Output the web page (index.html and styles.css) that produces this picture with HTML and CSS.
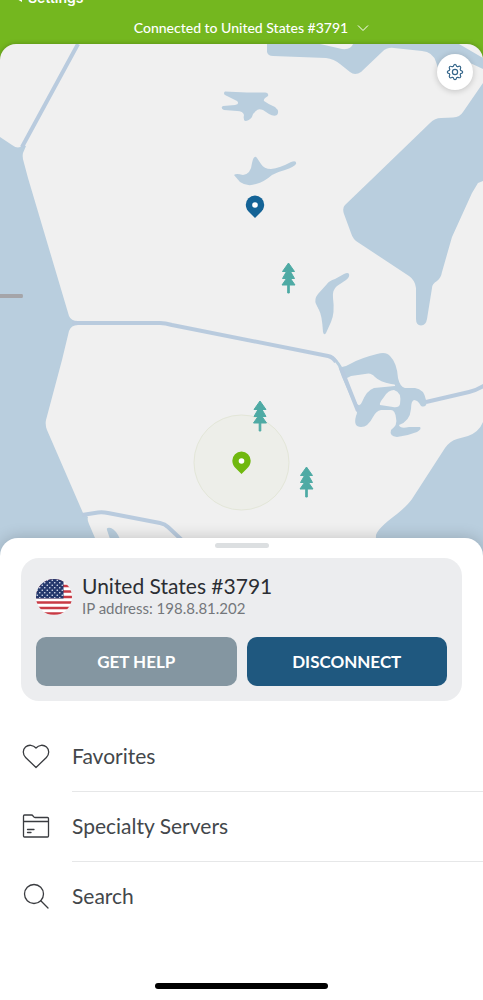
FILE: index.html
```html
<!DOCTYPE html>
<html lang="en">
<head>
<meta charset="utf-8">
<meta name="viewport" content="width=device-width, initial-scale=1">
<title>VPN connection</title>
<link rel="stylesheet" href="styles.css">
</head>
<body>
<div class="app">
  <header class="topbar">
    <a class="back" href="#"><span class="back-arrow" aria-hidden="true"></span>Settings</a>
    <button class="status" type="button">Connected to United States #3791
      <svg class="chevron" width="12" height="8" viewBox="0 0 12 8" aria-hidden="true"><path d="M1 1.500 6 6.500l5-5"/></svg>
    </button>
  </header>

  <main class="main">
    <section class="map" aria-label="Server map">
      <svg class="map-art" viewBox="0 44 483 520" preserveAspectRatio="xMidYMin slice" aria-hidden="true">
        <g class="water">
          <path d="M0 137 12 145Q19 150 22 145L26 146 23 153Q22 157 24 163L28 178 69 316Q71 321 78 321V325Q71 325 69 331L62 360 46 420Q45 425 47 430L83 513 88 517Q87 520 89 524L95 538 108 570H0Z"/>
          <path d="M267 44V52Q268 56 273 56L326 58Q334 59 340 64L350 72Q355 76 361 72L382 52Q387 47 394 48L422 51Q433 52 436 62L442 80 468 62 483 69V58L459 44H353Q351 50 342 49L320 44Z"/>
          <path d="M483 83 463 112Q460 117 453 117.500L441 118Q435 118 430 123L371 180 345 205Q342 208 344 214L351 233Q353 240 359 243L409 276Q415 280 416 288V319Q416 325 421 325.500 426 325 427 319L432 288Q432 284 437 281 441 278 442 272L452 237 472 193 478 183 483 181Z"/>
          <path d="M349 274Q350 277 346 280L337 286Q332 290 333 298 335 313 331 322L326 333Q324 336 323 332 322 315 319 310L316 304Q314 299 318 294L327 284Q329 281 335 279L344 274Q348 272 349 274Z"/>
          <path d="M225 91.500Q235 92 247 92.500H265Q269 93 268 96 263 99 264 101 268 104 275 107 280 111 277 115 274 117 269 114L263 110Q258 108 256 111 253 113 252 117 249 121 245 121 243 119 244 115 243 111 237 111L224 110Q220 108 223 106L235 105Q240 104 237 101L225 95Q223 93 225 91.500Z"/>
          <path d="M234 175Q236 173 243 175 251 174 252 163 254 154 257 158L261 164Q264 169 271 169 280 168 291 162 297 160 296 164 294 167 285 170 277 172 272 175 264 182 256 184 247 187 240 182Z"/>
          <path fill-rule="evenodd" d="M330 355Q337 358 342 367 347 366 352 363 361 358 377 354 386 351 390 356 397 363 398 378 400 387 405 388L415 388Q424 389 426 400L427 402Q426 408 421 406 418 400 414 400 411 401 411 409 410 421 399 425 400 429 409 427L420 427Q422 429 417 432 407 436 397 437 389 436 391 430 398 425 396 418 395 409 390 410L381 410Q376 411 373 417 368 427 361 427 353 427 356 416 358 412 356 409L342 377 338 366ZM347 378Q346 381 349 386L357 404Q360 407 362 402 367 390 374 388L395 386Q396 384 391 384 380 382 375 377 371 372 365 374L351 376ZM380 405Q379 403 384 397 388 390 394 390 402 392 400 404 399 408 393 407Z"/>
          <path d="M483 422Q479 432 468 436L457 439Q450 441 445 448L412 499Q408 505 397 514 378 528 376 535L375 570H483Z"/>
          <path d="M107 530Q106 527 111 528 116 530 120 539H110Z"/>
        </g>
        <path class="river" d="M78 44 22 147M72 323H160Q165 323 172 325L328 356Q333 357 336 362M341 368 358 411M426 402 469 392Q477 390 485 385M82 515 98 512.500Q103 512 108 513L160 523Q165 524 168 527L184 542"/>
        <circle class="halo" cx="241.500" cy="462.500" r="47.500"/>
        <g class="tree">
          <path id="tree" d="M288.500 263 294.500 271.500H290.500L294.500 278.500H290.500L295 285H289.300V293H287.700V285H282L286.500 278.500H282.500L286.500 271.500H282.500Z"/>
          <use href="#tree" x="-28.500" y="138"/>
          <use href="#tree" x="18" y="204"/>
        </g>
        <path class="pin-blue" d="M255 195.500A9.200 9.200 0 0 1 264.200 204.700C264.200 208 262.500 210.500 260.500 212.500L255 218 249.500 212.500C247.500 210.500 245.800 208 245.800 204.700A9.200 9.200 0 0 1 255 195.500Z"/>
        <circle class="pin-hole" cx="255" cy="205" r="2.800"/>
        <path class="pin-green" d="M241.500 451.500A9.200 9.200 0 0 1 250.700 460.700C250.700 464 249 466.500 247 468.500L241.500 474 236 468.500C234 466.500 232.300 464 232.300 460.700A9.200 9.200 0 0 1 241.500 451.500Z"/>
        <circle class="pin-hole" cx="241.500" cy="461" r="2.800"/>
        <path class="marker" d="M0 294H22Q23 294 23 296T22 298H0Z"/>
      </svg>
      <button class="settings" type="button" aria-label="Map settings">
        <svg width="18" height="18" viewBox="0 0 18 18" aria-hidden="true"><path d="M7.300 3.400Q7.800 1.300 9 1.300T10.700 3.400L11.800 3.800Q13.600 2.700 14.400 3.600T14.200 6.200L14.600 7.300Q16.700 7.800 16.700 9T14.600 10.700L14.200 11.800Q15.300 13.600 14.400 14.400T11.800 14.200L10.700 14.600Q10.200 16.700 9 16.700T7.300 14.600L6.200 14.200Q4.400 15.300 3.600 14.400T3.800 11.800L3.400 10.700Q1.300 10.200 1.300 9T3.400 7.300L3.800 6.200Q2.700 4.400 3.600 3.600T6.200 3.800Z"/><circle cx="9" cy="9" r="2.600"/></svg>
      </button>
    </section>

    <section class="sheet">
      <div class="grabber"></div>
      <div class="card">
        <div class="server">
          <svg class="flag" width="36" height="36" viewBox="0 0 36 36" role="img" aria-label="United States flag">
            <defs>
              <clipPath id="round"><circle cx="18" cy="18" r="18"/></clipPath>
              <pattern id="stars" width="5" height="5" patternUnits="userSpaceOnUse"><circle cx="1.250" cy="1.250" r=".8" fill="#dfe5f3"/><circle cx="3.750" cy="3.750" r=".8" fill="#dfe5f3"/></pattern>
            </defs>
            <g clip-path="url(#round)">
              <path fill="#fff" d="M0 0H36V36H0Z"/>
              <path stroke="#c83b45" stroke-width="2.700" d="M0 1.500H36M0 7H36M0 12.500H36M0 18H36M0 23.500H36M0 29H36M0 34.500H36"/>
              <path fill="#25396d" d="M0 0H27.500V19.500H0Z"/>
              <path fill="url(#stars)" d="M0 0H27V19H0Z"/>
            </g>
          </svg>
          <div class="server-text">
            <h1 class="server-name">United States #3791</h1>
            <p class="server-ip">IP address: 198.8.81.202</p>
          </div>
        </div>
        <div class="actions">
          <button class="btn btn-help" type="button">GET HELP</button>
          <button class="btn btn-disconnect" type="button">DISCONNECT</button>
        </div>
      </div>

      <nav class="menu">
        <a class="menu-item" href="#">
          <svg class="menu-icon" width="28" height="28" viewBox="0 0 28 28" aria-hidden="true"><path d="M14 25.500 3.600 15.500C.4 12.300 .7 7.500 3.500 5 6.500 2.400 11.200 2.700 14 6 16.800 2.700 21.500 2.400 24.500 5 27.300 7.500 27.600 12.300 24.400 15.500Z"/></svg>
          <span class="menu-label">Favorites</span>
        </a>
        <a class="menu-item" href="#">
          <svg class="menu-icon" width="28" height="28" viewBox="0 0 28 28" aria-hidden="true"><path d="M1.500 9.500V4Q1.500 3 2.500 3H9.500Q10.500 3 11 4L11.500 4.500Q12 5.500 13 5.500H25.500Q26.500 5.500 26.500 6.500V24Q26.500 25 25.500 25H2.500Q1.500 25 1.500 24V9.500H26.500M5.500 17.500H12M5.500 20.500H9"/></svg>
          <span class="menu-label">Specialty Servers</span>
        </a>
        <a class="menu-item" href="#">
          <svg class="menu-icon" width="28" height="28" viewBox="0 0 28 28" aria-hidden="true"><circle cx="12" cy="12" r="9.500"/><path d="M18.800 18.800 26 26"/></svg>
          <span class="menu-label">Search</span>
        </a>
      </nav>
      <div class="home-indicator"></div>
    </section>
  </main>
</div>
</body>
</html>
```
FILE: styles.css
```css
* {
  box-sizing: border-box;
}

body {
  margin: 0;
  font-family: Lato, "Open Sans", sans-serif;
  background: #74b71f;
}

button {
  border: 0;
  padding: 0;
  font: inherit;
  cursor: pointer;
}

svg {
  display: block;
}

.app {
  display: flex;
  flex-direction: column;
  min-height: 100vh;
}

.topbar {
  display: flex;
  flex-direction: column;
  align-items: center;
  height: 44px;
  color: #fff;
}

.back {
  display: flex;
  align-items: center;
  align-self: flex-start;
  gap: 6px;
  margin-top: -12px;
  padding-left: 15px;
  font-family: Inter, sans-serif;
  font-size: 14px;
  font-weight: 600;
  line-height: 20px;
  color: inherit;
  text-decoration: none;
}

.back-arrow {
  border: 4px solid transparent;
  border-left-width: 0;
  border-right: 7px solid #fff;
}

.status {
  display: flex;
  align-items: center;
  gap: 9px;
  margin-top: 10px;
  padding-left: 20px;
  font-size: 14px;
  font-weight: 500;
  line-height: 20px;
  color: inherit;
  background: none;
}

.chevron {
  fill: none;
  stroke: #fff;
}

.main {
  display: flex;
  flex: 1;
  flex-direction: column;
}

.map {
  position: relative;
  height: 520px;
  overflow: hidden;
  border-radius: 16px 16px 0 0;
  background: #f0f0f0;
  box-shadow: 0 0 5px rgb(0 0 0 / 25%);
}

.map-art {
  width: 100%;
  height: 100%;
}

.water {
  fill: #b9cede;
}

.river {
  fill: none;
  stroke: #b9cbde;
  stroke-width: 4px;
  stroke-linejoin: round;
}

.tree {
  fill: #4eaaa4;
  stroke: #4eaaa4;
  stroke-linejoin: round;
}

.halo {
  fill: #edeee9;
  stroke: #e3e6d8;
}

.pin-blue {
  fill: #146396;
}

.pin-green {
  fill: #70b80f;
}

.pin-hole {
  fill: #fff;
}

.marker {
  fill: #a5a5a9;
}

.settings {
  position: absolute;
  top: 10px;
  right: 10px;
  display: grid;
  place-items: center;
  width: 36px;
  height: 36px;
  border-radius: 50%;
  background: #fff;
  box-shadow: 0 1px 6px rgb(0 0 0 / 20%);
}

.settings svg {
  fill: none;
  stroke: #34658a;
  stroke-width: 1.2px;
  stroke-linejoin: round;
}

.sheet {
  position: relative;
  display: flex;
  flex: 1;
  flex-direction: column;
  margin-top: -26px;
  padding-top: 5px;
  border-radius: 18px 18px 0 0;
  background: #fff;
  box-shadow: 0 0 16px rgb(0 0 0 / 20%);
}

.grabber {
  align-self: center;
  width: 54px;
  height: 5px;
  border-radius: 3px;
  background: #dcdfe1;
}

.card {
  margin: 10px 21px 0;
  padding: 15px;
  border-radius: 18px;
  background: #ecedef;
}

.server {
  display: flex;
  align-items: center;
  gap: 10px;
  height: 48px;
}

.server-text {
  padding-bottom: 2px;
}

.server-name {
  margin: 0;
  font-size: 21px;
  font-weight: 400;
  line-height: 24px;
  color: #2b2e33;
}

.server-ip {
  margin: 0;
  font-size: 15px;
  line-height: 20px;
  color: #74777b;
}

.actions {
  display: grid;
  grid-template-columns: 1fr 1fr;
  gap: 10px;
  margin-top: 16px;
}

.btn {
  height: 49px;
  border-radius: 10px;
  font-size: 17px;
  font-weight: 700;
  color: #fff;
}

.btn-help {
  background: #8496a1;
}

.btn-disconnect {
  background: #1f587f;
}

.menu {
  display: flex;
  flex-direction: column;
  margin-top: 21px;
}

.menu-item {
  display: flex;
  align-items: center;
  gap: 22px;
  height: 70px;
  padding-left: 22px;
  color: #43474b;
  text-decoration: none;
}

.menu-icon {
  margin-bottom: 2px;
  fill: none;
  stroke: #3a3c40;
  stroke-width: 1.3px;
  stroke-linejoin: round;
  stroke-linecap: round;
}

.menu-label {
  display: flex;
  flex: 1;
  align-items: center;
  height: 100%;
  padding-bottom: 3px;
  border-bottom: 1px solid #e6e7e8;
  font-size: 21px;
}

.menu-item:last-child .menu-label {
  border-bottom: 0;
}

.home-indicator {
  align-self: center;
  width: 173px;
  height: 6px;
  margin: auto 0 11px;
  border-radius: 3px;
  background: #000;
}
```
